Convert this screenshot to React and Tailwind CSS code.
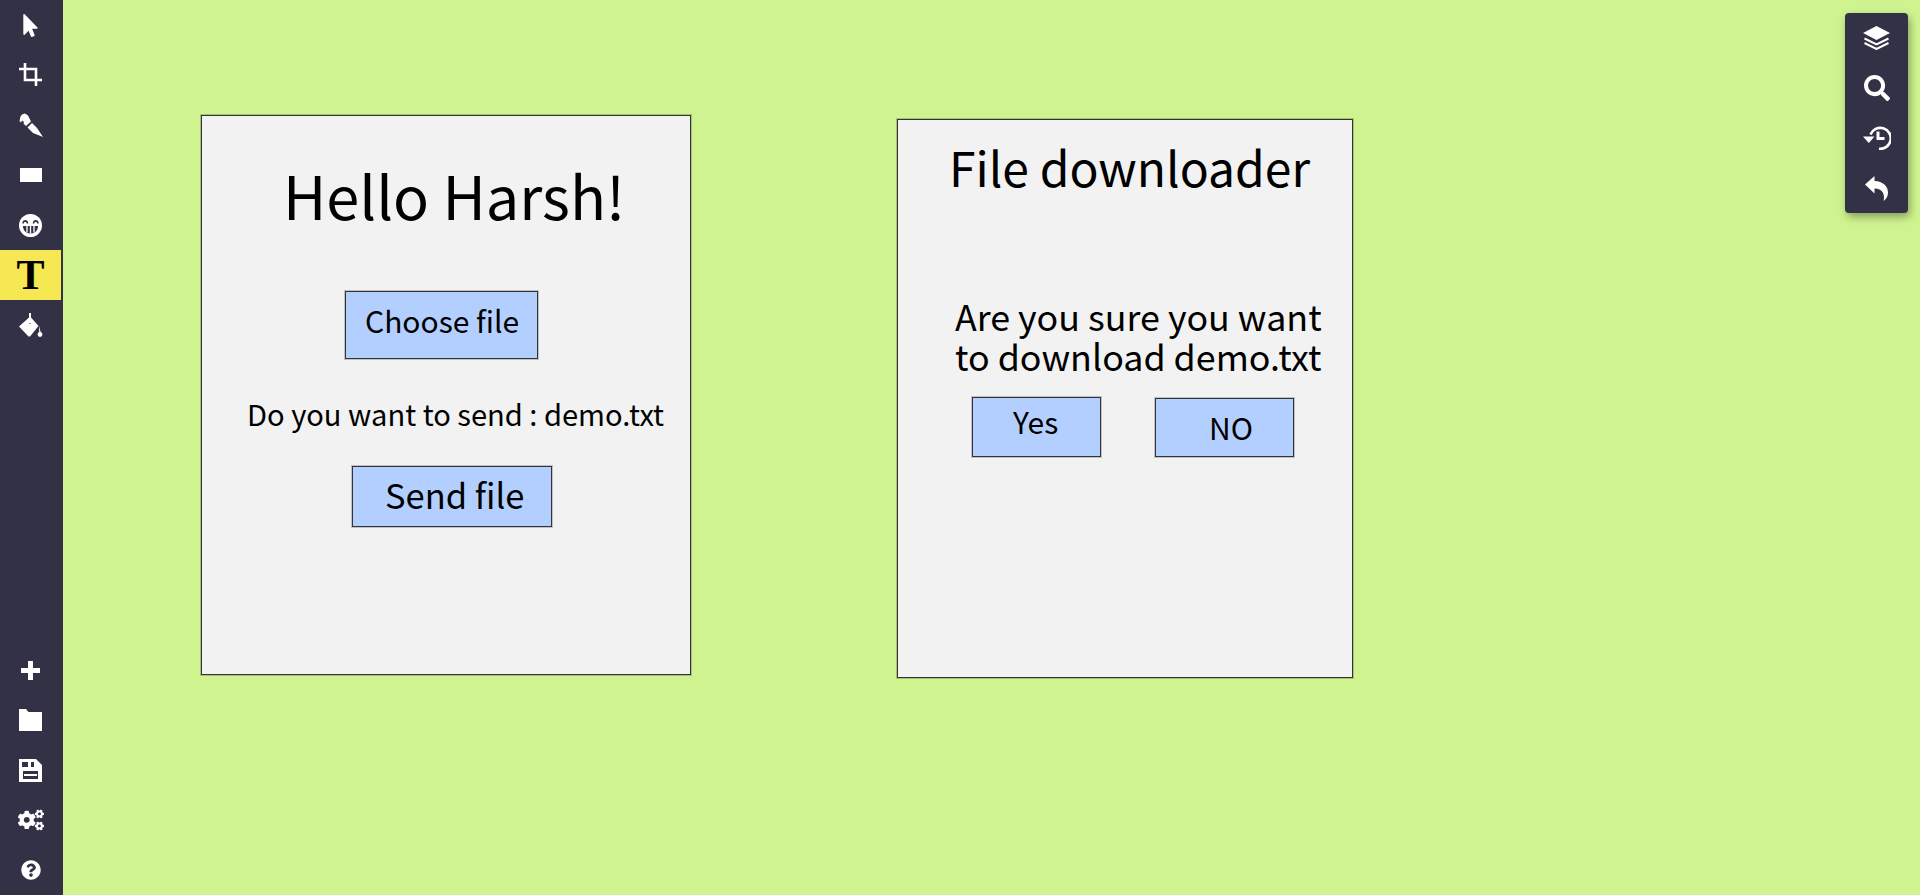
import { FaQuestionCircle, FaCogs, FaSearch, FaMousePointer } from "react-icons/fa";

const font = "font-['Noto_Sans_CJK_SC','Noto_Sans',sans-serif]";
const DARK = "#333146";

const Slot = ({ children, className = "" }) => (
  <div className={`flex h-[50px] w-[61px] items-center justify-center text-white ${className}`}>{children}</div>
);

const CropIcon = () => (
  <svg className="-mt-[2px]" width="23" height="23" viewBox="0 0 23 23" fill="none" stroke="white" strokeWidth="2.6">
    <path d="M6 0v17h17M0 6h17v17" />
  </svg>
);

const PenIcon = () => (
  <svg width="24" height="24" viewBox="0 0 24 24" fill="white">
    <path d="M24 24 14 20 8.5 14.5 13 10 18 15Z" />
    <path d="M7 13 4.5 10.5 5 9 3 7.5 2 9.5 .5 8 1.5 3.5 3 1.5 6 .5 9 2.5 12 8.5Z" />
  </svg>
);

const GrinIcon = () => (
  <svg width="23" height="23" viewBox="0 0 23 23">
    <circle cx="11.5" cy="11.5" r="11.5" fill="white" />
    <path d="M4 9.5C4.5 6 8 6 8.5 9.5M14.5 9.5C15 6 18.5 6 19 9.5" fill="none" stroke={DARK} strokeWidth="1.6" />
    <path d="M4 12H19C19 16.5 16 19.5 11.5 19.5S4 16.5 4 12Z" fill={DARK} />
    <path d="M8 12V18.5M11.5 12V19.5M15 12V18.5" stroke="white" strokeWidth="1.3" />
  </svg>
);

const BucketIcon = () => (
  <svg width="24" height="24" viewBox="0 0 24 24" fill="white">
    <path d="M0 13.5 10 4.5V10.5H12V4.5L19.5 13 11 23.5H9.5Z" />
    <path d="M10 0H12V10H10Z" />
    <path d="M20 13 21.8 19.5H20.2Z" />
    <circle cx="21" cy="21.5" r="2.4" />
  </svg>
);

const PlusIcon = () => (
  <svg width="19" height="19" viewBox="0 0 19 19" fill="white">
    <path d="M7 0h5v7h7v5h-7v7H7v-7H0V7h7Z" />
  </svg>
);

const FolderIcon = () => (
  <svg width="23" height="22" viewBox="0 0 23 22" fill="white">
    <path d="M0 0H7L9.5 3H23V22H0Z" />
  </svg>
);

const SaveIcon = () => (
  <svg width="23" height="23" viewBox="0 0 23 23" fill="white" fillRule="evenodd">
    <path d="M0 0H17L23 6V23H0ZM3 3V8H9V3ZM12 3V8H15V3ZM4 12V20H19V12Z" />
    <path d="M5 15H18V17H5Z" />
  </svg>
);

const LayersIcon = () => (
  <svg width="27" height="24" viewBox="0 0 27 24" fill="none" stroke="white" strokeWidth="2">
    <path d="M13.5 0 27 7 13.5 14 0 7Z" fill="white" stroke="none" />
    <path d="M1.5 12.5 13.5 18.5 25.5 12.5M1.5 17 13.5 23 25.5 17" />
  </svg>
);

const HistoryIcon = () => (
  <svg width="28" height="24" viewBox="0 0 28 24" fill="none" stroke="white">
    <path d="M7.5 8.5A10.5 10.5 0 1 1 16 22.8" strokeWidth="2.6" />
    <path d="M0 10.5H11.5L5.8 17Z" fill="white" stroke="none" />
    <path d="M15 5.5V12.5H21.5" strokeWidth="3" />
  </svg>
);

const ReplyIcon = () => (
  <svg width="23" height="25" viewBox="0 0 23 25" fill="white">
    <path d="M0 8.5 9.5 0V5C18 5.5 23 10 23 16.5 23 20 21.5 23 18.5 25 20 19.5 18.5 12.5 9.5 12.5V17.5Z" />
  </svg>
);

const Button = ({ className, textClass, children }) => (
  <div className={`flex shrink-0 items-center border border-[#333] bg-[#b3cfff] shadow-[0_0_0_1px_rgba(0,0,0,0.2)] ${className}`}>
    <span className={`whitespace-nowrap ${textClass}`}>{children}</span>
  </div>
);

const Card = ({ className, children }) => (
  <section className={`absolute flex flex-col items-start border border-[#333] bg-[#f2f2f2] text-black shadow-[0_0_0_1px_rgba(0,0,0,0.2)] ${className}`}>
    {children}
  </section>
);

const App = () => {
  return (
    <div className={`relative flex h-[895px] w-[1920px] overflow-hidden bg-[#cff48f] ${font}`}>
      <aside className="flex h-full w-[63px] shrink-0 flex-col justify-between bg-[#333146]">
        <div>
          <Slot><FaMousePointer className="text-[23px]" /></Slot>
          <Slot><CropIcon /></Slot>
          <Slot><PenIcon /></Slot>
          <Slot><div className="h-[14px] w-[22px] bg-white" /></Slot>
          <Slot><GrinIcon /></Slot>
          <div className="flex h-[50px] w-[61px] items-center justify-center bg-[#f5e852] font-['Liberation_Serif',serif] text-[42px] font-bold leading-none text-black">
            T
          </div>
          <Slot><BucketIcon /></Slot>
        </div>
        <div>
          <Slot><PlusIcon /></Slot>
          <Slot><FolderIcon /></Slot>
          <Slot><SaveIcon /></Slot>
          <Slot><FaCogs className="text-[26px]" /></Slot>
          <Slot><FaQuestionCircle className="text-[20px]" /></Slot>
        </div>
      </aside>

      <Card className="left-[201px] top-[115px] h-[560px] w-[490px]">
        <h1 className="ml-[81px] mt-[36px] whitespace-nowrap text-[59.5px] font-normal leading-[84px]">Hello Harsh!</h1>
        <Button className="ml-[143px] mt-[55px] h-[68px] w-[193px] pb-[10px] pl-[19px]" textClass="text-[30px] leading-[42px]">
          Choose file
        </Button>
        <p className="ml-[45px] mt-[34px] whitespace-nowrap text-[29.1px] leading-[40px]">Do you want to send : demo.txt</p>
        <Button className="ml-[150px] mt-[33px] h-[61px] w-[200px] pb-[6px] pl-[32px]" textClass="text-[34.5px] leading-[48px]">
          Send file
        </Button>
      </Card>

      <Card className="left-[897px] top-[119px] h-[559px] w-[456px]">
        <h2 className="ml-[51px] mt-[12px] whitespace-nowrap text-[48px] font-normal leading-[68px]">File downloader</h2>
        <p className="ml-[57px] mt-[95px] whitespace-nowrap text-[35.8px] leading-[40px]">
          Are you sure you want
          <br />
          to download demo.txt
        </p>
        <div className="ml-[74px] mt-[22px] flex items-end gap-[54px]">
          <Button className="h-[60px] w-[129px] pb-[12px] pl-[40px]" textClass="text-[30px] leading-[42px]">Yes</Button>
          <Button className="h-[59px] w-[139px] pb-[2px] pl-[53px]" textClass="text-[30px] leading-[42px]">NO</Button>
        </div>
      </Card>

      <div className="absolute left-[1845px] top-[13px] flex w-[63px] flex-col items-center rounded bg-[#333146] shadow-[2px_4px_8px_rgba(0,0,0,0.35)]">
        <Slot><LayersIcon /></Slot>
        <Slot><FaSearch className="text-[26px]" /></Slot>
        <Slot><HistoryIcon /></Slot>
        <Slot><ReplyIcon /></Slot>
      </div>
    </div>
  );
};

export default App;
